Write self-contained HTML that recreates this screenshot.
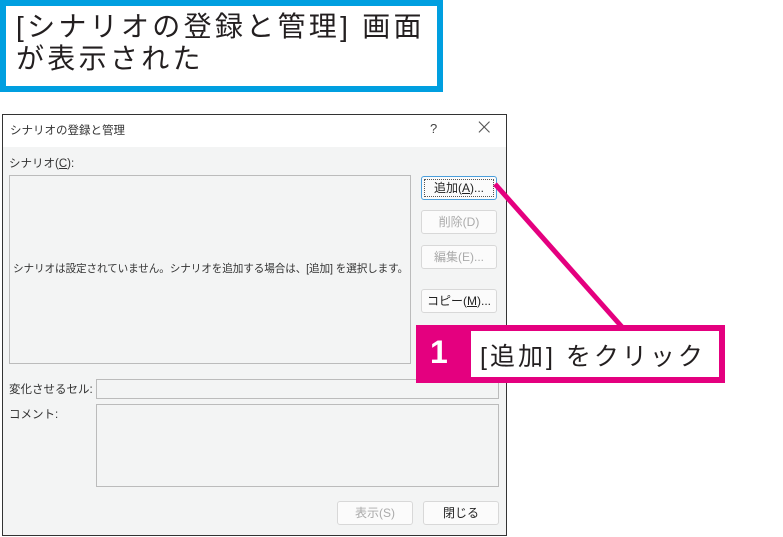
<!DOCTYPE html>
<html><head><meta charset="utf-8"><style>
*{margin:0;padding:0;box-sizing:border-box}
body{width:783px;height:537px;background:#fff;position:relative;overflow:hidden;font-family:"Liberation Sans","Noto Sans CJK JP",sans-serif;color:#222}
.a{position:absolute;white-space:nowrap}
.btn{position:absolute;width:76px;height:24px;border:1px solid #d8d8d8;border-radius:3px;background:#fbfbfb;font-size:12px;text-align:center;line-height:22px;color:#aaa}
.s{font-size:11.5px;color:#333}
</style></head><body>
<div class="a" style="left:0;top:0;width:443px;height:92px;border:6px solid #009fe0;background:#fff"></div>
<div class="a" style="left:16px;top:11px;font-size:28px;line-height:32px;color:#231f20;letter-spacing:3.3px">[シナリオの登録と管理]&nbsp;画面<br>が表示された</div>

<div class="a" style="left:2px;top:114px;width:505px;height:422px;border:1px solid #333;background:#f3f4f4"></div>
<div class="a" style="left:3px;top:115px;width:503px;height:32px;background:#fff"></div>
<div class="a s" style="left:10px;top:122px">シナリオの登録と管理</div>
<div class="a" style="left:430px;top:121px;font-size:13px;color:#444">?</div>
<div class="a" style="left:475px;top:115px;font-size:22px;font-weight:100;color:#555;font-family:'DejaVu Sans',sans-serif">×</div>
<div class="a s" style="left:9px;top:155px">シナリオ(<u>C</u>):</div>
<div class="a" style="left:9px;top:175px;width:402px;height:189px;border:1px solid #bbb;background:#f3f4f4"></div>
<div class="a" style="left:13px;top:261px;font-size:10.6px;color:#333;letter-spacing:-0.1px">シナリオは設定されていません。シナリオを追加する場合は、[追加] を選択します。</div>
<div class="btn" style="left:421px;top:176px;border:1px solid #4a9edb;color:#222;outline:1px dotted #555;outline-offset:-4px">追加(<u>A</u>)...</div>
<div class="btn" style="left:421px;top:210px">削除(D)</div>
<div class="btn" style="left:421px;top:245px">編集(E)...</div>
<div class="btn" style="left:421px;top:289px;color:#222">コピー(<u>M</u>)...</div>
<div class="a s" style="left:9px;top:381px">変化させるセル:</div>
<div class="a" style="left:96px;top:379px;width:403px;height:20px;border:1px solid #bbb"></div>
<div class="a s" style="left:9px;top:406px">コメント:</div>
<div class="a" style="left:96px;top:404px;width:403px;height:83px;border:1px solid #bbb"></div>
<div class="btn" style="left:337px;top:501px">表示(S)</div>
<div class="btn" style="left:423px;top:501px;color:#222">閉じる</div>

<svg class="a" style="left:0;top:0" width="783" height="537"><line x1="495" y1="184" x2="622" y2="327" stroke="#e4007f" stroke-width="5"/></svg>
<div class="a" style="left:416px;top:325px;width:309px;height:58px;background:#e4007f"></div>
<div class="a" style="left:471px;top:331px;width:248px;height:46px;background:#fff"></div>
<div class="a" style="left:430px;top:334px;font-size:32px;font-weight:bold;color:#fff">1</div>
<div class="a" style="left:480px;top:337px;font-size:25px;color:#231f20;letter-spacing:3px">[追加]&nbsp;をクリック</div>
</body></html>
